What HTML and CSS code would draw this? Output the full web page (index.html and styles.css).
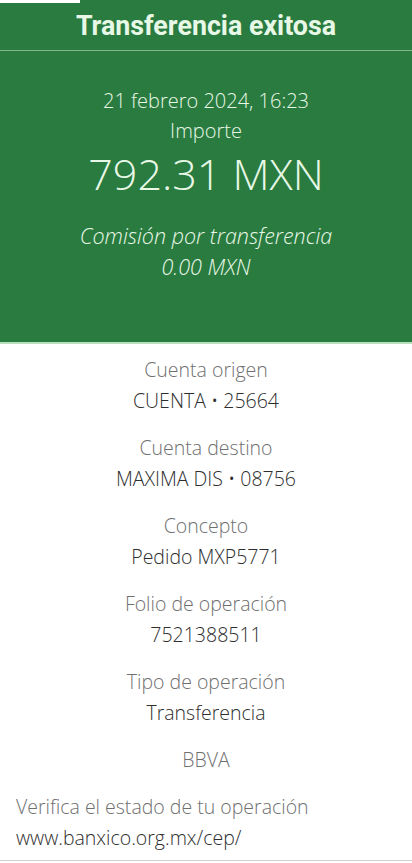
FILE: index.html
```html
<!doctype html>
<html>
	<head>
		<title>Transferencia exitosa</title>
		<link rel="stylesheet" href="styles.css">
	</head>
	<body>

		<div id="status-strip"></div>

		<div id="summary">
			<h1 id="title">Transferencia exitosa</h1>
			<div id="summary-body">
				<div class="summary-line">21 febrero 2024, 16:23</div>
				<div class="summary-line">Importe</div>
				<div id="amount">792.31 MXN</div>
				<div id="fee">
					<div>Comisión por transferencia</div>
					<div>0.00 MXN</div>
				</div>
			</div>
		</div>

		<div id="details">
			<div class="detail">
				<div class="detail-label">Cuenta origen</div>
				<div class="detail-value">CUENTA • 25664</div>
			</div>
			<div class="detail">
				<div class="detail-label">Cuenta destino</div>
				<div class="detail-value">MAXIMA DIS • 08756</div>
			</div>
			<div class="detail">
				<div class="detail-label">Concepto</div>
				<div class="detail-value">Pedido MXP5771</div>
			</div>
			<div class="detail">
				<div class="detail-label">Folio de operación</div>
				<div class="detail-value">7521388511</div>
			</div>
			<div class="detail">
				<div class="detail-label">Tipo de operación</div>
				<div class="detail-value">Transferencia</div>
			</div>
			<div class="detail">
				<div class="detail-label">BBVA</div>
			</div>
		</div>

		<div id="verify">
			<div class="verify-label">Verifica el estado de tu operación</div>
			<div class="verify-link">www.banxico.org.mx/cep/</div>
		</div>

	</body>
</html>
```

FILE: styles.css
```css
body {
	margin: 0;
	background: #ffffff;
	font-family: "Open Sans", "Liberation Sans", sans-serif;
	height: 863px;
	overflow: hidden;
}

#status-strip {
	height: 3px;
	width: 80px;
	background: #ffffff;
	margin-bottom: -3px;
	position: relative;
}

#summary {
	background: #2a7b40;
	color: #e8f8e6;
	height: 344px;
	border-bottom: 2px solid #b9e0bd;
	box-sizing: border-box;
}

#title {
	margin: 0;
	height: 51px;
	padding-top: 3px;
	line-height: 47px;
	font-family: Roboto, "Liberation Sans", sans-serif;
	font-size: 26.8px;
	font-weight: bold;
	text-align: center;
	border-bottom: 1px solid #83b790;
	box-sizing: border-box;
}

#summary-body {
	padding-top: 35px;
	text-align: center;
}

.summary-line {
	font-size: 20px;
	font-weight: 300;
	line-height: 30px;
}

#amount {
	font-size: 43px;
	font-weight: 300;
	line-height: 46px;
	margin-top: 5px;
}

#fee {
	margin-top: 23px;
	font-size: 21.5px;
	font-style: italic;
	font-weight: 300;
	line-height: 31px;
}

#details {
	padding-top: 10px;
	text-align: center;
}

.detail {
	margin-bottom: 16px;
}

.detail-label {
	font-size: 19.5px;
	font-weight: 300;
	color: #6f6f6f;
	line-height: 31px;
}

.detail-value {
	font-size: 19.5px;
	font-weight: 350;
	color: #2e2e2e;
	line-height: 31px;
}

#verify {
	padding: 0 16px 7px 16px;
	margin-top: 14px;
	border-bottom: 1px solid #cfcfcf;
}

.verify-label {
	font-size: 19.5px;
	font-weight: 300;
	color: #6f6f6f;
	line-height: 31px;
}

.verify-link {
	font-size: 19.5px;
	font-weight: 350;
	color: #2e2e2e;
	line-height: 31px;
}
```
